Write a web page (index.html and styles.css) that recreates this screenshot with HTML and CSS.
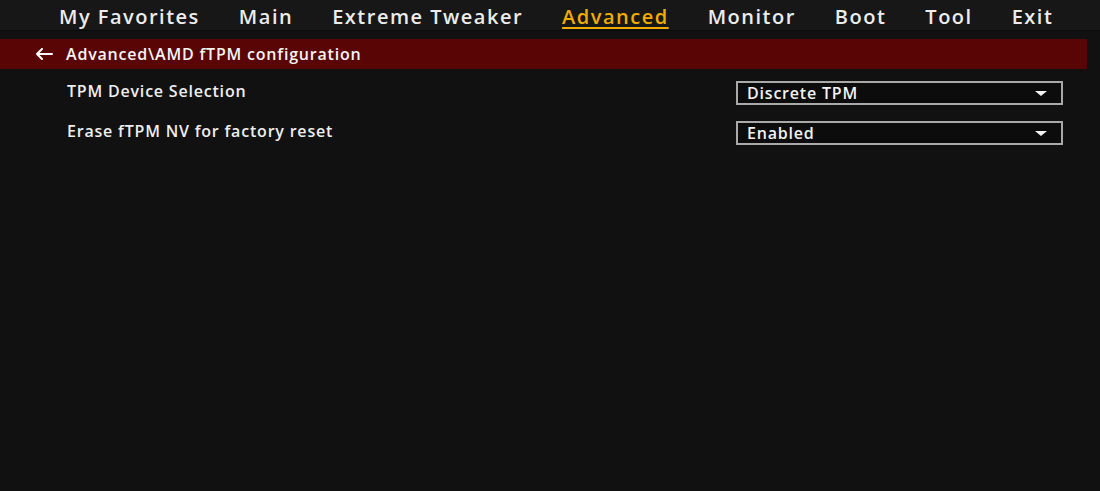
FILE: index.html
```html
<!DOCTYPE html>
<html>
<head>
    <title>Advanced - AMD fTPM configuration</title>
    <link rel="stylesheet" href="styles.css">
</head>
<body>
    <div class="menu">
        <span class="menu-item">My Favorites</span>
        <span class="menu-item">Main</span>
        <span class="menu-item">Extreme Tweaker</span>
        <span class="menu-item active">Advanced</span>
        <span class="menu-item">Monitor</span>
        <span class="menu-item">Boot</span>
        <span class="menu-item">Tool</span>
        <span class="menu-item">Exit</span>
    </div>

    <div class="path-bar">
        <svg class="back-arrow" width="18" height="12" viewBox="0 0 18 12">
            <path d="M17 6H2M7 1L2 6l5 5" fill="none" stroke="#fff" stroke-width="2" stroke-linecap="round" stroke-linejoin="round"/>
        </svg>
        <span>Advanced\AMD fTPM configuration</span>
    </div>

    <div class="settings">
        <div class="setting-row">
            <span class="setting-label">TPM Device Selection</span>
            <div class="select-box">
                <span>Discrete TPM</span>
                <span class="caret"></span>
            </div>
        </div>
        <div class="setting-row">
            <span class="setting-label">Erase fTPM NV for factory reset</span>
            <div class="select-box">
                <span>Enabled</span>
                <span class="caret"></span>
            </div>
        </div>
    </div>
</body>
</html>
```

FILE: styles.css
```css
/* Global styles */
* {
    margin: 0;
    padding: 0;
    box-sizing: border-box;
}

body {
    font-family: 'Open Sans', 'DejaVu Sans', sans-serif;
    font-weight: 600;
    background-color: #111;
    color: #eee;
    min-height: 100vh;
}

/* Top menu */
.menu {
    height: 31px;
    background-color: #171717;
    border-bottom: 1px solid #0a0a0a;
    display: flex;
    align-items: center;
    gap: 39px;
    padding: 3px 0 0 59px;
    font-size: 20px;
    letter-spacing: 1.5px;
}

.menu-item {
    color: #ececec;
    line-height: 1;
}

.menu-item.active {
    color: #f0ac00;
    text-decoration: underline;
    text-decoration-thickness: 2px;
    text-underline-offset: 3px;
}

/* Breadcrumb bar */
.path-bar {
    margin-top: 8px;
    width: 1087px;
    height: 30px;
    background-color: #5a0505;
    display: flex;
    align-items: center;
    padding-left: 35px;
    font-size: 16px;
    letter-spacing: 0.8px;
    color: #f4f4f4;
}

.back-arrow {
    margin-right: 13px;
}

/* Setting rows */
.settings {
    display: flex;
    flex-direction: column;
    gap: 16px;
    padding: 12px 0 0 67px;
}

.setting-row {
    display: flex;
    align-items: center;
    justify-content: space-between;
    width: 996px;
    height: 24px;
    font-size: 16px;
    letter-spacing: 0.8px;
}

.setting-label {
    margin-bottom: 5px;
}

.select-box {
    width: 327px;
    height: 24px;
    border: 2px solid #a9a9a9;
    background-color: #0c0c0c;
    display: flex;
    align-items: center;
    justify-content: space-between;
    padding: 0 14px 0 9px;
    color: #f2f2f2;
}

.caret {
    width: 0;
    height: 0;
    border-left: 6px solid transparent;
    border-right: 6px solid transparent;
    border-top: 5px solid #f2f2f2;
}
```
